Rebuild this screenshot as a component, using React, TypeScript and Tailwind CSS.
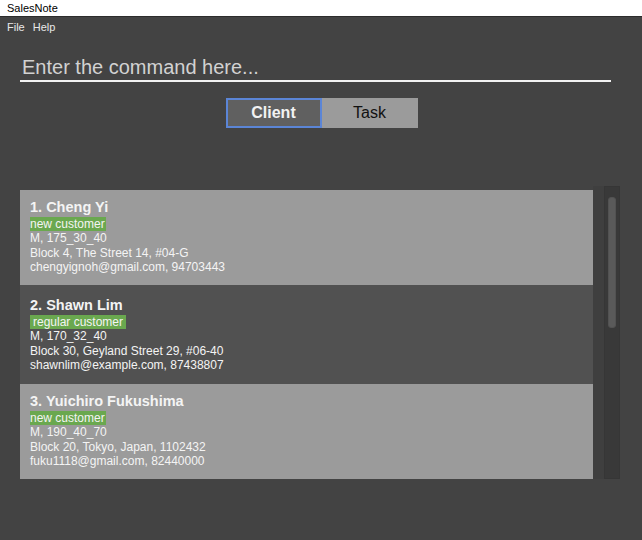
import { type ReactNode } from 'react'

type Client = { name: string; tag: string; tagPad?: boolean; size: string; address: string; contact: string }

const clients: Client[] = [
  { name: 'Cheng Yi', tag: 'new customer', size: 'M, 175_30_40', address: 'Block 4, The Street 14, #04-G', contact: 'chengyignoh@gmail.com, 94703443' },
  { name: 'Shawn Lim', tag: 'regular customer', tagPad: true, size: 'M, 170_32_40', address: 'Block 30, Geyland Street 29, #06-40', contact: 'shawnlim@example.com, 87438807' },
  { name: 'Yuichiro Fukushima', tag: 'new customer', size: 'M, 190_40_70', address: 'Block 20, Tokyo, Japan, 1102432', contact: 'fuku1118@gmail.com, 82440000' },
]

function Card({ c, i }: { c: Client; i: number }) {
  const dark = i % 2 === 1
  return (
    <div className={`px-[10px] ${dark ? 'bg-[#515151] pt-[12px] h-[99px]' : 'bg-[#9b9b9b] pt-[9px] h-[95px]'} text-[#f4f4f4]`}>
      <div className="text-[14.5px] font-bold leading-[17px]">{i + 1}. {c.name}</div>
      <div className={`mt-[1px] w-fit bg-[#6aa84f] text-[12px] leading-[14px] ${c.tagPad ? 'px-[3px]' : 'pr-[1px]'}`}>{c.tag}</div>
      <div className="text-[12px] leading-[14.5px]">{c.size}</div>
      <div className="text-[12px] leading-[14.5px]">{c.address}</div>
      <div className="text-[12px] leading-[14.5px]">{c.contact}</div>
    </div>
  )
}

function Tab({ children, active }: { children: ReactNode; active?: boolean }) {
  return (
    <div className={`w-[96px] h-[30px] flex items-center justify-center text-[16px] ${active ? 'bg-[#606060] border-2 border-[#5b85d6] font-bold text-[#f2f2f2]' : 'bg-[#9b9b9b] text-[#111]'}`}>
      {children}
    </div>
  )
}

export default function App() {
  return (
    <div className="w-[642px] h-[540px] bg-[#434343] flex flex-col" style={{ fontFamily: '"Liberation Sans", Arial, sans-serif' }}>
      <div className="h-[17px] bg-white text-black text-[11px] leading-[17px] pl-[7px] border-b border-[#2c2c2c]">SalesNote</div>
      <div className="h-[20px] flex items-center gap-[8px] pl-[7px] text-[11px] text-[#e8e8e8]">
        <span>File</span>
        <span>Help</span>
      </div>
      <div className="mx-[20px] mt-[18px] w-[591px] border-b-2 border-[#f2f2f2] pb-[1px]">
        <div className="text-[20px] leading-[24px] pl-[2px] text-[#d2d2d2]">Enter the command here...</div>
      </div>
      <div className="flex justify-center mt-[16px] pl-[1px]">
        <Tab active>Client</Tab>
        <Tab>Task</Tab>
      </div>
      <div className="flex mt-[58px] ml-[20px]">
        <div className="w-[573px] flex flex-col mt-[4px]">
          {clients.map((c, i) => <Card key={c.name} c={c} i={i} />)}
        </div>
        <div className="w-[11px] bg-[#3f3f3f]" />
        <div className="w-[16px] h-[293px] bg-[#393939] border border-[#363636] pt-[10px] px-[3px]">
          <div className="h-[131px] rounded-[3px] bg-[#5a5a5a] border border-[#525252]" />
        </div>
      </div>
    </div>
  )
}
